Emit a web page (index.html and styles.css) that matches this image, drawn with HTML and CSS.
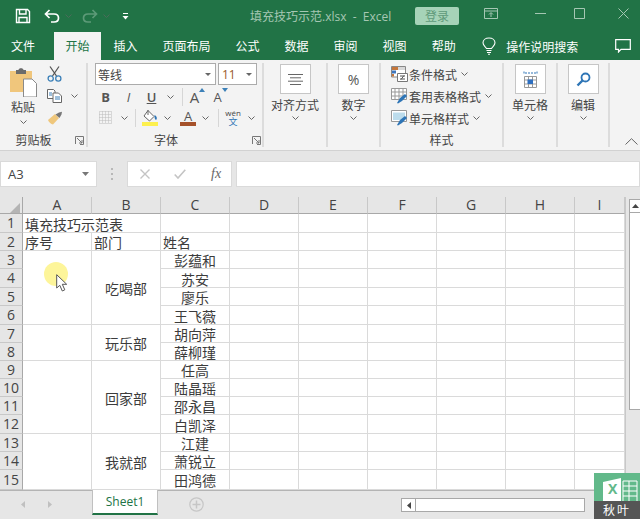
FILE: index.html
```html
<!DOCTYPE html>
<html lang="zh-CN">
<head>
    <meta charset="UTF-8">
    <title>填充技巧示范.xlsx - Excel</title>
    <link rel="stylesheet" href="styles.css">
</head>
<body>

<svg class="defs">
    <symbol id="chev" viewBox="0 0 7 4"><path d="M.5.500 3.500 3.500 6.500.5" fill="none" stroke="#666" stroke-width="1"/></symbol>
    <symbol id="launch" viewBox="0 0 9 9"><path d="M.5 8V.5H8.500V8.500H5M2 2 7 7M7 4V7H4" fill="none" stroke="#777"/></symbol>
</svg>

<div class="titlebar">
    <div class="qat">
        <svg class="qat-save" width="16" height="16" viewBox="0 0 16 16"><path d="M1.500 1.500H12.500L14.500 3.500V14.500H1.500ZM4.500 1.500V6H11V1.500M4 14.500V9.500H12V14.500" fill="none" stroke="#fff" stroke-width="1.400"/></svg>
        <svg class="qat-undo" width="16" height="14" viewBox="0 0 16 14"><path d="M5.500 1 1.500 5 5.500 9M2 5H10C13 5 14.500 7 14.500 9 14.500 11 13 13 10 13H7" fill="none" stroke="#fff" stroke-width="1.700"/></svg>
        <svg class="qat-chev" width="7" height="4"><use href="#chev"/></svg>
        <svg class="qat-redo" width="16" height="14" viewBox="0 0 16 14"><path d="M10.500 1 14.500 5 10.500 9M14 5H6C3 5 1.500 7 1.500 9 1.500 11 3 13 6 13H9" fill="none" stroke="#5d9a78" stroke-width="1.700"/></svg>
        <svg class="qat-chev" width="7" height="4"><use href="#chev"/></svg>
        <svg class="qat-more" width="7" height="7" viewBox="0 0 7 7"><path d="M1 .5H6" stroke="#fff"/><path d="M.5 3H6.500L3.500 6.500Z" fill="#fff"/></svg>
    </div>
    <div class="doc-title">填充技巧示范.xlsx&nbsp; - &nbsp;Excel</div>
    <div class="login">登录</div>
    <div class="win-btns">
        <svg width="14" height="11" viewBox="0 0 14 11"><path d="M.5.500H13.500V10.500H.5ZM.5 3H13.500M7 9V5M5 6.500 7 4.500 9 6.500" fill="none" stroke="#a5c7b3"/></svg>
        <svg class="win-min" width="11" height="1" viewBox="0 0 11 1"><path d="M0 .5H11" stroke="#a5c7b3"/></svg>
        <svg class="win-max" width="11" height="11" viewBox="0 0 11 11"><path d="M.5.500H10.500V10.500H.5Z" fill="none" stroke="#a5c7b3"/></svg>
        <svg class="win-close" width="11" height="11" viewBox="0 0 11 11"><path d="M.5.500 10.500 10.500M10.500.5.5 10.500" stroke="#a5c7b3"/></svg>
    </div>
</div>

<div class="tabs">
    <div class="tab tab-file">文件</div>
    <div class="tab tab-active">开始</div>
    <div class="tab">插入</div>
    <div class="tab">页面布局</div>
    <div class="tab">公式</div>
    <div class="tab">数据</div>
    <div class="tab">审阅</div>
    <div class="tab">视图</div>
    <div class="tab">帮助</div>
    <svg class="bulb" width="14" height="18" viewBox="0 0 14 18"><path d="M4.500 11.500C3.500 9.500 1 8.500 1 5.800 1 3 3.500 1 7 1S13 3 13 5.800C13 8.500 10.500 9.500 9.500 11.500ZM4.500 13.500H9.500M5 15.500H9M6 17.300H8" fill="none" stroke="#fff" stroke-width="1.100"/></svg>
    <div class="search-hint">操作说明搜索</div>
    <svg class="comment" width="16" height="14" viewBox="0 0 16 14"><path d="M.7.700H15.300V10.300H6L3.500 13V10.300H.7Z" fill="none" stroke="#fff" stroke-width="1.200"/></svg>
</div>

<div class="ribbon">
    <div class="group group-clip">
        <div class="group-body">
            <div class="paste">
                <svg width="28" height="30" viewBox="0 0 28 30">
                    <path d="M1 4H23V25H1Z" fill="#f0c67c"/>
                    <path d="M7 3H9.500C9.500 .5 14.500 .5 14.500 3H17V7H7Z" fill="#6b6b6b"/>
                    <path d="M14.500 12H23L27.500 16.500V30H14.500Z" fill="#fff" stroke="#8a8a8a"/>
                </svg>
                <span class="paste-text">粘贴</span>
                <svg class="caret" width="7" height="4"><use href="#chev"/></svg>
            </div>
            <div class="clip-tools">
                <div class="clip-row">
                    <svg width="15" height="16" viewBox="0 0 15 16"><path d="M3 .5 9.500 10M12 .5 5.500 10" stroke="#555" stroke-width="1.300"/><circle cx="3.700" cy="12.500" r="2.600" fill="none" stroke="#3c80b8" stroke-width="1.300"/><circle cx="11.300" cy="12.500" r="2.600" fill="none" stroke="#3c80b8" stroke-width="1.300"/></svg>
                </div>
                <div class="clip-row">
                    <svg width="15" height="14" viewBox="0 0 15 14"><path d="M.5.500H6.500L8 2V9.500H.5Z" fill="#fff" stroke="#666"/><path d="M6 4H11.500L14.500 7V13.500H6Z" fill="#fff" stroke="#666"/><path d="M2 4H5M2 6H5M8 8H13M8 10H13" stroke="#3c80b8"/></svg>
                    <svg class="clip-chev" width="7" height="4"><use href="#chev"/></svg>
                </div>
                <div class="clip-row">
                    <svg width="16" height="14" viewBox="0 0 16 14"><path d="M1 9 8 3 12 7 6 13.500C4 13 2 11.500 1 9Z" fill="#efc77c"/><path d="M8.500 3.500 12 1.500 15 .8 14.500 3.500 12.500 7Z" fill="#777"/></svg>
                </div>
            </div>
        </div>
        <div class="group-label"><span class="label-text">剪贴板</span><svg class="launcher" width="9" height="9"><use href="#launch"/></svg></div>
    </div>

    <div class="group group-font">
        <div class="group-body font-body">
            <div class="font-row font-row-select">
                <div class="select select-name"><span>等线</span><svg width="6" height="3" viewBox="0 0 6 3"><path d="M0 0H6L3 3Z" fill="#666"/></svg></div>
                <div class="select select-size"><span class="size-num">11</span><svg width="6" height="3" viewBox="0 0 6 3"><path d="M0 0H6L3 3Z" fill="#666"/></svg></div>
            </div>
            <div class="font-row">
                <span class="fmt fmt-b">B</span>
                <span class="fmt fmt-i">I</span>
                <span class="fmt fmt-u">U</span>
                <span class="chev-cell"><svg width="7" height="4"><use href="#chev"/></svg></span>
                <span class="vsep vsep-a"></span>
                <span class="grow">A<svg width="6" height="4" viewBox="0 0 6 4"><path d="M0 4 3 0 6 4Z" fill="#3c80b8"/></svg></span>
                <span class="grow grow-small">A<svg width="6" height="4" viewBox="0 0 6 4"><path d="M0 0 3 4 6 0Z" fill="#3c80b8"/></svg></span>
            </div>
            <div class="font-row">
                <span class="fmt"><svg width="13" height="13" viewBox="0 0 13 13"><path d="M.5.500H12.500V12.500H.5ZM6.500.5V12.500M.5 6.500H12.500M3.500.5V12.500M9.500.5V12.500M.5 3.500H12.500M.5 9.500H12.500" fill="none" stroke="#bbb" stroke-dasharray="1 1"/></svg></span>
                <span class="chev-cell"><svg width="7" height="4"><use href="#chev"/></svg></span>
                <span class="vsep vsep-b"></span>
                <span class="colorbtn">
                    <svg width="15" height="12" viewBox="0 0 15 12"><path d="M5 .5 11 6.500 6.500 11 1 6Z" fill="#fff" stroke="#666"/><path d="M5 0V5" stroke="#666"/><path d="M11.500 5C14 6 14.500 9 13 10 11.500 9.500 11.500 7 11.500 5Z" fill="#2e75b6"/></svg>
                    <i class="swatch swatch-yellow"></i>
                </span>
                <span class="chev-cell"><svg width="7" height="4"><use href="#chev"/></svg></span>
                <span class="colorbtn colorbtn-a">
                    <b>A</b>
                    <i class="swatch swatch-brown"></i>
                </span>
                <span class="chev-cell"><svg width="7" height="4"><use href="#chev"/></svg></span>
                <span class="vsep vsep-c"></span>
                <span class="wen"><span class="wen-top">wén</span><span class="wen-zi">文</span></span>
                <span class="chev-cell"><svg width="7" height="4"><use href="#chev"/></svg></span>
            </div>
        </div>
        <div class="group-label"><span class="label-text">字体</span><svg class="launcher" width="9" height="9"><use href="#launch"/></svg></div>
    </div>

    <div class="group group-align">
        <div class="group-body big">
            <div class="big-box"><svg width="15" height="11" viewBox="0 0 15 11"><path d="M0 .5H15M2 3.800H13M0 7.200H15M2 10.500H13" stroke="#666"/></svg></div>
            <span class="big-text">对齐方式</span>
            <svg class="caret" width="7" height="4"><use href="#chev"/></svg>
        </div>
    </div>

    <div class="group group-num">
        <div class="group-body big">
            <div class="big-box big-pct">%</div>
            <span class="big-text">数字</span>
            <svg class="caret" width="7" height="4"><use href="#chev"/></svg>
        </div>
    </div>

    <div class="group group-styles">
        <div class="group-body styles-body">
            <div class="style-row">
                <svg width="17" height="16" viewBox="0 0 17 16"><path d="M.5.500H14.500V11H.5Z" fill="#fff" stroke="#888"/><path d="M1 1H7V4H1Z" fill="#c5763a"/><path d="M7 1H14V4H7Z" fill="#d9d9d9"/><path d="M1 4.500H5V7.500H1Z" fill="#3f77bd"/><path d="M1 8H3V10.500H1Z" fill="#c5763a"/><path d="M6.500 7.500H16.500V15.500H6.500Z" fill="#fff" stroke="#777"/><path d="M9 10H14M9 13H14M13 9.500 10 13.500" stroke="#555"/></svg>
                <span>条件格式</span>
                <svg class="style-chev" width="7" height="4"><use href="#chev"/></svg>
            </div>
            <div class="style-row">
                <svg width="17" height="16" viewBox="0 0 17 16"><path d="M.5.500H15.500V11.500H.5ZM4 .5V11.500M8 .5V11.500M12 .5V11.500M.5 4H15.500M.5 8H15.500" fill="#fff" stroke="#999"/><path d="M6 15 9 10 14 6 16 8 11 13 7 15.500Z" fill="#2e75b6"/></svg>
                <span>套用表格格式</span>
                <svg class="style-chev" width="7" height="4"><use href="#chev"/></svg>
            </div>
            <div class="style-row">
                <svg width="17" height="16" viewBox="0 0 17 16"><path d="M.5.500H15.500V11.500H.5Z" fill="#fff" stroke="#999"/><path d="M2 2.500H14V10H2Z" fill="#bcdcec"/><path d="M6 15 9 10 14 6 16 8 11 13 7 15.500Z" fill="#2e75b6"/></svg>
                <span>单元格样式</span>
                <svg class="style-chev" width="7" height="4"><use href="#chev"/></svg>
            </div>
        </div>
        <div class="group-label"><span class="label-text">样式</span></div>
    </div>

    <div class="group group-cells">
        <div class="group-body big">
            <div class="big-box"><svg width="15" height="17" viewBox="0 0 15 17"><path d="M1 .5V3.500M14 .5V3.500M2 2H13" stroke="#2e75b6" stroke-dasharray="2 1"/><path d="M1.500 5.500H13.500V16.500H1.500ZM1.500 9H13.500M1.500 13H13.500M5.500 5.500V16.500M9.500 5.500V16.500" fill="#fff" stroke="#999"/><path d="M4.500 8.500H10V13H4.500Z" fill="#2e6fc0"/></svg></div>
            <span class="big-text">单元格</span>
            <svg class="caret" width="7" height="4"><use href="#chev"/></svg>
        </div>
    </div>

    <div class="group group-edit">
        <div class="group-body big">
            <div class="big-box"><svg width="15" height="15" viewBox="0 0 15 15"><circle cx="9.500" cy="5.500" r="4" fill="none" stroke="#2e75b6" stroke-width="1.800"/><path d="M6.500 8.500 1.500 13.500" stroke="#2e75b6" stroke-width="2.400"/></svg></div>
            <span class="big-text">编辑</span>
            <svg class="caret" width="7" height="4"><use href="#chev"/></svg>
        </div>
    </div>

    <svg class="collapse" width="13" height="7" viewBox="0 0 13 7"><path d="M.5 6.500 6.500.7 12.500 6.500" fill="none" stroke="#666"/></svg>
</div>

<div class="formula-bar">
    <div class="name-box"><span>A3</span><svg width="7" height="4" viewBox="0 0 7 4"><path d="M0 0H7L3.500 4Z" fill="#777"/></svg></div>
    <div class="grip"><i></i><i></i><i></i></div>
    <div class="fx-btns">
        <svg width="10" height="10" viewBox="0 0 10 10"><path d="M.5.500 9.500 9.500M9.500.5.500 9.500" stroke="#c4c4c4" stroke-width="1.400"/></svg>
        <svg width="12" height="10" viewBox="0 0 12 10"><path d="M.7 5.500 4 9 11.300.7" fill="none" stroke="#c4c4c4" stroke-width="1.600"/></svg>
        <span class="fx">fx</span>
    </div>
    <div class="formula-input"></div>
</div>

<div class="sheet-area">
    <table class="sheet">
        <colgroup><col class="col-head"><col class="col-std"><col class="col-std"><col class="col-std"><col class="col-std"><col class="col-std"><col class="col-std"><col class="col-std"><col class="col-std"><col class="col-last"></colgroup>
        <tr class="head-row">
            <th class="corner"><svg width="10" height="10" viewBox="0 0 10 10"><path d="M10 0V10H0Z" fill="#b4b4b4"/></svg></th>
            <th>A</th><th>B</th><th>C</th><th>D</th><th>E</th><th>F</th><th>G</th><th>H</th><th>I</th>
        </tr>
        <tr class="h19"><th>1</th><td colspan="2">填充技巧示范表</td><td></td><td></td><td></td><td></td><td></td><td></td><td></td></tr>
        <tr class="h18"><th>2</th><td>序号</td><td>部门</td><td>姓名</td><td></td><td></td><td></td><td></td><td></td><td></td></tr>
        <tr class="h18"><th>3</th><td rowspan="4"></td><td rowspan="4" class="mid">吃喝部</td><td class="mid">彭蕴和</td><td></td><td></td><td></td><td></td><td></td><td></td></tr>
        <tr class="h19"><th>4</th><td class="mid">苏安</td><td></td><td></td><td></td><td></td><td></td><td></td></tr>
        <tr class="h18"><th>5</th><td class="mid">廖乐</td><td></td><td></td><td></td><td></td><td></td><td></td></tr>
        <tr class="h19"><th>6</th><td class="mid">王飞薇</td><td></td><td></td><td></td><td></td><td></td><td></td></tr>
        <tr class="h18"><th>7</th><td rowspan="2"></td><td rowspan="2" class="mid">玩乐部</td><td class="mid">胡向萍</td><td></td><td></td><td></td><td></td><td></td><td></td></tr>
        <tr class="h18"><th>8</th><td class="mid">薛柳瑾</td><td></td><td></td><td></td><td></td><td></td><td></td></tr>
        <tr class="h18"><th>9</th><td rowspan="4"></td><td rowspan="4" class="mid">回家部</td><td class="mid">任高</td><td></td><td></td><td></td><td></td><td></td><td></td></tr>
        <tr class="h18"><th>10</th><td class="mid">陆晶瑶</td><td></td><td></td><td></td><td></td><td></td><td></td></tr>
        <tr class="h18"><th>11</th><td class="mid">邵永昌</td><td></td><td></td><td></td><td></td><td></td><td></td></tr>
        <tr class="h19"><th>12</th><td class="mid">白凯泽</td><td></td><td></td><td></td><td></td><td></td><td></td></tr>
        <tr class="h18"><th>13</th><td rowspan="3"></td><td rowspan="3" class="mid">我就部</td><td class="mid">江建</td><td></td><td></td><td></td><td></td><td></td><td></td></tr>
        <tr class="h18"><th>14</th><td class="mid">萧锐立</td><td></td><td></td><td></td><td></td><td></td><td></td></tr>
        <tr class="h20"><th>15</th><td class="mid">田鸿德</td><td></td><td></td><td></td><td></td><td></td><td></td></tr>
    </table>
    <div class="vscroll">
        <div class="vscroll-up"><svg width="7" height="4" viewBox="0 0 7 4"><path d="M0 4H7L3.500 0Z" fill="#444"/></svg></div>
        <div class="vscroll-thumb"></div>
    </div>
</div>

<div class="sheet-bar">
    <div class="sheet-nav">
        <svg width="4" height="7" viewBox="0 0 4 7"><path d="M4 0V7L0 3.500Z" fill="#c0c0c0"/></svg>
        <svg width="4" height="7" viewBox="0 0 4 7"><path d="M0 0V7L4 3.500Z" fill="#c0c0c0"/></svg>
    </div>
    <div class="sheet-tab">Sheet1</div>
    <svg class="add-sheet" width="15" height="15" viewBox="0 0 15 15"><circle cx="7.500" cy="7.500" r="6.700" fill="none" stroke="#c6c6c6" stroke-width="1.200"/><path d="M7.500 3.500V11.500M3.500 7.500H11.500" stroke="#c6c6c6" stroke-width="1.500"/></svg>
    <div class="hscroll">
        <div class="hscroll-left"><svg width="4" height="7" viewBox="0 0 4 7"><path d="M4 0V7L0 3.500Z" fill="#444"/></svg></div>
    </div>
</div>

<!-- recording overlays -->
<div class="click-spot"></div>
<svg class="pointer" width="12" height="18" viewBox="0 0 12 18"><path d="M.7.700V14L3.800 11.300 6.300 17 8.800 15.800 6.300 10.300H10.700Z" fill="#fff" stroke="#555"/></svg>

<div class="watermark">
    <div class="wm-top">
        <svg width="36" height="26" viewBox="0 0 36 26">
            <path d="M1 4 19 0V26L1 23Z" fill="#fff"/>
            <path d="M21 3H35V25H21Z" fill="none" stroke="#fff"/>
            <path d="M21 8H35M21 13H35M21 18H35M27 3V25" stroke="#fff"/>
        </svg>
        <span class="wm-x">X</span>
    </div>
    <div class="wm-name">秋叶</div>
</div>

</body>
</html>
```

FILE: styles.css
```css
body {
    margin: 0;
    width: 640px;
    height: 519px;
    overflow: hidden;
    position: relative;
    background-color: #e6e6e6;
    font-family: "Noto Sans CJK SC", "Open Sans", sans-serif;
    font-size: 12px;
    color: #444;
}

svg {
    display: block;
    flex: none;
}

.defs {
    display: none;
}

/* title bar */

.titlebar {
    height: 32px;
    background-color: #217346;
    display: flex;
    align-items: center;
}

.qat {
    display: flex;
    align-items: center;
    width: 250px;
    padding-left: 15px;
    box-sizing: border-box;
}

.qat-undo {
    margin-left: 13px;
}

.qat-chev {
    margin-left: 5px;
    opacity: 0.6;
}

.qat-redo {
    margin-left: 10px;
}

.qat-more {
    margin-left: 12px;
}

.doc-title {
    width: 165px;
    color: #a5c7b3;
    font-family: "Open Sans", "Noto Sans CJK SC", sans-serif;
    white-space: nowrap;
}

.login {
    width: 44px;
    height: 18px;
    line-height: 18px;
    margin-top: -1px;
    text-align: center;
    background-color: #a6d3b8;
    color: #5f9a7a;
    border-radius: 2px;
    font-size: 12px;
}

.win-btns {
    display: flex;
    align-items: center;
    margin-top: -5px;
    padding-left: 25px;
}

.win-min {
    margin-left: 37px;
}

.win-max {
    margin-left: 28px;
}

.win-close {
    margin-left: 33px;
}

/* tabs */

.tabs {
    height: 28px;
    background-color: #217346;
    display: flex;
    align-items: center;
    color: #fff;
}

.tab {
    height: 28px;
    line-height: 27px;
    padding: 0 12.5px;
}

.tab-file {
    padding: 0 19px 0 11px;
}

.tab-active {
    padding: 0 11.5px;
    background-color: #f3f3f3;
    color: #217346;
}

.bulb {
    margin-left: 14px;
}

.search-hint {
    margin-left: 10px;
}

.comment {
    margin-left: 37px;
}

/* ribbon */

.ribbon {
    height: 91px;
    box-sizing: border-box;
    padding-top: 3px;
    background-color: #f3f3f3;
    border-bottom: 1px solid #d2d2d2;
    display: flex;
    align-items: flex-start;
    position: relative;
}

.group {
    height: 84px;
    box-sizing: border-box;
    border-right: 2px solid #dcdcdc;
    display: flex;
    flex-direction: column;
}

.group-body {
    flex: 1;
    min-height: 0;
}

.group-label {
    height: 14px;
    line-height: 14px;
    display: flex;
    align-items: center;
}

.label-text {
    flex: 1;
    text-align: center;
}

.launcher {
    margin: 0 2px 0 8px;
}

.group-font .launcher {
    margin-right: 1px;
}

.group-clip {
    width: 88px;
}

.group-font {
    width: 176px;
}

.group-align {
    width: 64px;
}

.group-num {
    width: 53px;
}

.group-styles {
    width: 123px;
}

.group-cells {
    width: 54px;
}

.group-edit {
    width: 52px;
}

.collapse {
    position: absolute;
    right: 2px;
    bottom: 5px;
}

/* clipboard */

.group-clip .group-body {
    display: flex;
}

.paste {
    width: 46px;
    display: flex;
    flex-direction: column;
    align-items: center;
    padding-top: 4px;
    box-sizing: border-box;
}

.paste-text {
    line-height: 14px;
    margin-top: 3px;
}

.paste .caret {
    margin-top: 6px;
}

.clip-row {
    height: 22px;
    width: 30px;
    display: flex;
    align-items: center;
    margin-left: 1px;
}

.clip-chev {
    margin-left: 9px;
}

/* font */

.font-body {
    padding-left: 6px;
}

.font-row {
    height: 21px;
    display: flex;
    align-items: center;
}

.font-row-select {
    height: 23px;
    gap: 2px;
    padding-left: 1px;
    align-items: flex-start;
}

.select {
    height: 22px;
    box-sizing: border-box;
    background-color: #fff;
    border: 1px solid #ababab;
    display: flex;
    align-items: center;
    justify-content: space-between;
    padding: 0 4px 0 2px;
}

.select-name {
    width: 121px;
}

.select-size {
    width: 39px;
    padding-left: 3px;
}

.size-num {
    color: #9a5a2a;
    font-family: "Open Sans", sans-serif;
}

.fmt {
    width: 23px;
    display: flex;
    justify-content: center;
    font-family: "Open Sans", sans-serif;
    font-size: 13px;
    line-height: 16px;
    color: #555;
}

.fmt-b {
    font-weight: 700;
}

.fmt-i {
    font-style: italic;
}

.fmt-u {
    text-decoration: underline;
    font-weight: 600;
}

.chev-cell {
    width: 14px;
    display: flex;
    justify-content: center;
}

.vsep {
    width: 1px;
    height: 18px;
    background-color: #d6d6d6;
}

.vsep-a {
    margin: 0 3px 0 5px;
}

.vsep-b {
    margin: 0 4px;
}

.vsep-c {
    margin: 0 3px 0 6px;
}

.grow {
    width: 23px;
    display: flex;
    justify-content: center;
    font-family: "Open Sans", sans-serif;
    font-size: 15px;
    line-height: 18px;
    color: #555;
}

.grow-small {
    font-size: 13px;
}

.colorbtn {
    width: 20px;
    display: flex;
    flex-direction: column;
    align-items: center;
}

.colorbtn-a {
    margin-left: 4px;
}

.colorbtn-a b {
    font-family: "Open Sans", sans-serif;
    font-size: 13px;
    line-height: 12px;
    font-weight: 400;
    color: #555;
}

.swatch {
    display: block;
    width: 16px;
    height: 4px;
}

.swatch-yellow {
    background-color: #fdf04e;
}

.swatch-brown {
    background-color: #a5512a;
}

.wen {
    width: 22px;
    display: flex;
    flex-direction: column;
    align-items: center;
}

.wen-top {
    font-family: "Open Sans", sans-serif;
    font-size: 8px;
    line-height: 8px;
}

.wen-zi {
    font-size: 9px;
    line-height: 10px;
    color: #2e75b6;
}

/* big ribbon buttons */

.big {
    display: flex;
    flex-direction: column;
    align-items: center;
    padding-top: 1px;
}

.big-box {
    width: 31px;
    height: 30px;
    box-sizing: border-box;
    background-color: #fff;
    border: 1px solid #c6c6c6;
    display: flex;
    align-items: center;
    justify-content: center;
}

.big-pct {
    font-family: "Open Sans", sans-serif;
    font-size: 14px;
    color: #555;
}

.big-text {
    line-height: 14px;
    margin-top: 4px;
    white-space: nowrap;
}

.big .caret {
    margin-top: 4px;
}

/* styles */

.styles-body {
    padding-left: 10px;
}

.style-row {
    height: 22px;
    display: flex;
    align-items: center;
    gap: 1px;
}

.style-chev {
    margin-left: 3px;
}

/* formula bar */

.formula-bar {
    height: 46px;
    box-sizing: border-box;
    padding-top: 10px;
    background-color: #e6e6e6;
    display: flex;
    align-items: flex-start;
}

.name-box {
    width: 97px;
    height: 26px;
    box-sizing: border-box;
    background-color: #fff;
    border: 1px solid #dadada;
    display: flex;
    align-items: center;
    justify-content: space-between;
    padding: 0 7px;
    font-family: "Open Sans", sans-serif;
    font-size: 13px;
}

.grip {
    width: 30px;
    height: 26px;
    display: flex;
    flex-direction: column;
    align-items: center;
    justify-content: center;
    gap: 3px;
}

.grip i {
    width: 2px;
    height: 2px;
    background-color: #b8b8b8;
}

.fx-btns {
    width: 105px;
    height: 26px;
    box-sizing: border-box;
    background-color: #fff;
    border: 1px solid #dadada;
    display: flex;
    align-items: center;
    padding-left: 12px;
    gap: 24px;
}

.fx {
    font-family: "Liberation Serif", serif;
    font-style: italic;
    font-size: 14px;
    color: #666;
    margin-left: 1px;
}

.formula-input {
    flex: 1;
    height: 26px;
    margin-left: 4px;
    background-color: #fff;
    border: 1px solid #dadada;
    box-sizing: border-box;
}

/* sheet */

.sheet-area {
    height: 293px;
    display: flex;
}

.sheet {
    width: 625px;
    height: 293px;
    table-layout: fixed;
    border-collapse: separate;
    border-spacing: 0;
    background-color: #fff;
    font-size: 14px;
    color: #3c3c3c;
}

.col-head {
    width: 23px;
}

.col-std {
    width: 69px;
}

.col-last {
    width: 50px;
}

.head-row {
    height: 17px;
}

.h18 {
    height: 18px;
}

.h19 {
    height: 19px;
}

.h20 {
    height: 20px;
}

th {
    padding: 0;
    box-sizing: border-box;
    background-color: #e6e6e6;
    border-right: 1px solid #c8c8c8;
    border-bottom: 1px solid #c8c8c8;
    font-family: "Open Sans", sans-serif;
    font-size: 14px;
    font-weight: 400;
    line-height: 16px;
    color: #444;
    text-align: center;
}

tr > th:first-child {
    border-right-color: #a8a8a8;
}

.head-row th {
    border-bottom-color: #a8a8a8;
}

.corner svg {
    margin: 5px 2px 0 auto;
}

td {
    padding: 2px 0 0 2px;
    box-sizing: border-box;
    border-right: 1px solid #dadada;
    border-bottom: 1px solid #dadada;
    line-height: 15px;
    white-space: nowrap;
}

td.mid {
    padding: 2px 0 0;
    text-align: center;
}

.vscroll {
    flex: 1;
    padding-left: 3px;
    padding-top: 2px;
    border-left: 1px solid #c8c8c8;
    box-sizing: border-box;
}

.vscroll-up {
    height: 14px;
    box-sizing: border-box;
    background-color: #fff;
    border: 1px solid #a8a8a8;
    border-right: none;
    display: flex;
    align-items: center;
    justify-content: center;
}

.vscroll-thumb {
    height: 197px;
    box-sizing: border-box;
    background-color: #fff;
    border: 1px solid #a8a8a8;
    border-top: none;
    border-right: none;
}

/* sheet tabs */

.sheet-bar {
    height: 28px;
    box-sizing: border-box;
    background-color: #e6e6e6;
    border-top: 1px solid #b4b4b4;
    display: flex;
    align-items: flex-start;
}

.sheet-nav {
    width: 92px;
    box-sizing: border-box;
    padding: 10px 0 0 21px;
    display: flex;
    gap: 23px;
}

.sheet-tab {
    width: 66px;
    height: 25px;
    line-height: 23px;
    margin-top: -1px;
    box-sizing: border-box;
    text-align: center;
    background-color: #fff;
    border: 1px solid #c0c0c0;
    border-top: none;
    border-bottom: 2px solid #217346;
    color: #217346;
    font-family: "Open Sans", sans-serif;
}

.add-sheet {
    margin: 6px 0 0 31px;
}

.hscroll {
    width: 184px;
    height: 14px;
    margin: 7px 0 0 197px;
    box-sizing: border-box;
    background-color: #fff;
    border: 1px solid #a8a8a8;
}

.hscroll-left {
    width: 14px;
    height: 12px;
    box-sizing: border-box;
    border-right: 1px solid #a8a8a8;
    display: flex;
    align-items: center;
    justify-content: center;
}

/* overlays */

.click-spot {
    position: absolute;
    left: 44px;
    top: 262px;
    width: 24px;
    height: 24px;
    border-radius: 50%;
    background-color: #fdf59a;
}

.pointer {
    position: absolute;
    left: 56px;
    top: 274px;
}

.watermark {
    position: absolute;
    right: 0;
    bottom: 0;
    width: 46px;
}

.wm-top {
    height: 28px;
    background-color: #62b98a;
    position: relative;
    overflow: hidden;
    padding: 5px 0 0 8px;
    box-sizing: border-box;
}

.wm-x {
    position: absolute;
    left: 14px;
    top: 8px;
    font-family: "Open Sans", sans-serif;
    font-size: 14px;
    font-weight: 700;
    line-height: 16px;
    color: #62b98a;
}

.wm-name {
    height: 18px;
    line-height: 18px;
    background-color: #555;
    color: #fff;
    text-align: center;
    letter-spacing: 2px;
}
```
